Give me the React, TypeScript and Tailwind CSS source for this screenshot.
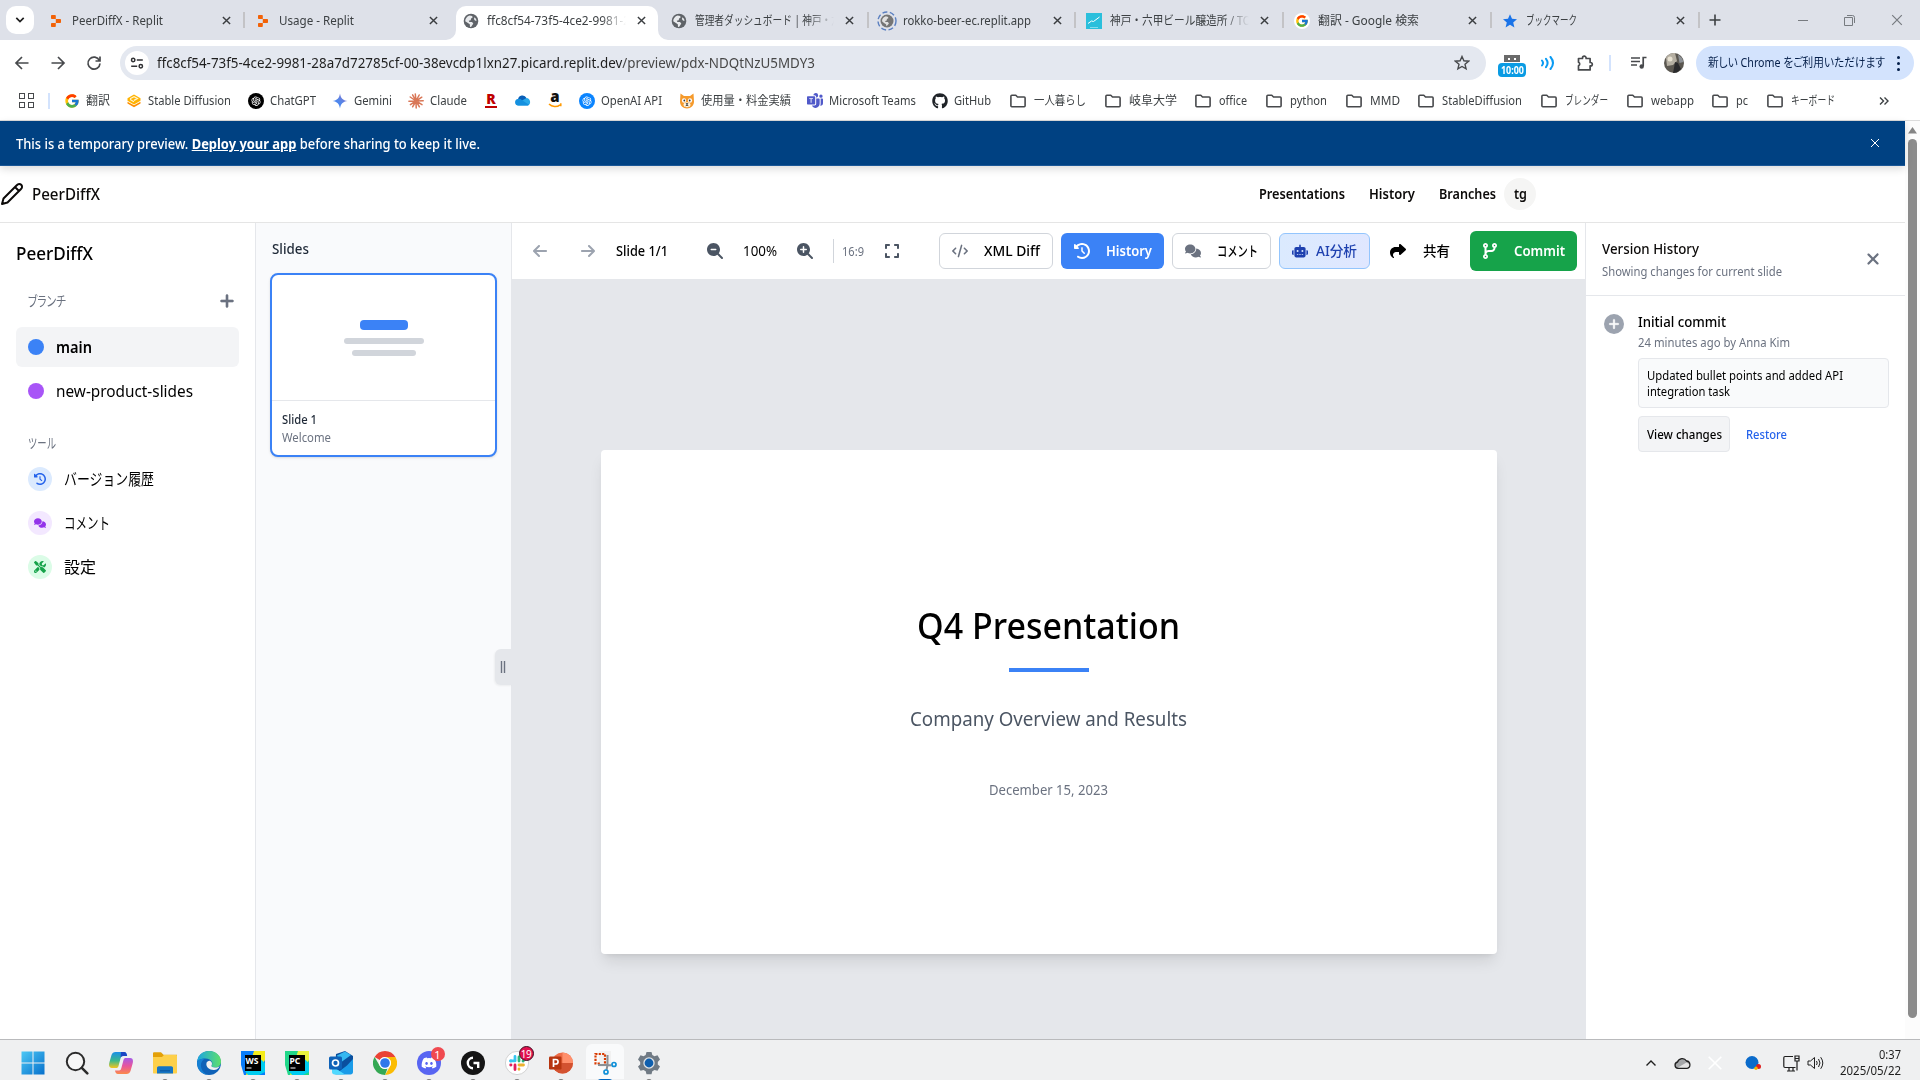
import { useLayoutEffect, useRef, useState } from "react";
import type { ReactNode } from "react";
import { FcGoogle } from "react-icons/fc";
import { AiOutlineOpenAI } from "react-icons/ai";
import { BsMicrosoftTeams } from "react-icons/bs";
import {
  FaArrowLeft,
  FaArrowRight,
  FaClockRotateLeft,
  FaCode,
  FaCodeBranch,
  FaComments,
  FaDiscord,
  FaExpand,
  FaGithub,
  FaMagnifyingGlassMinus,
  FaMagnifyingGlassPlus,
  FaPlus,
  FaRobot,
  FaScrewdriverWrench,
  FaShare,
  FaXmark,
} from "react-icons/fa6";

/** A single line of text condensed or widened to fill `w` pixels. */
function T({ w, className = "", children }: { w: number; className?: string; children: ReactNode }) {
  const ref = useRef<HTMLSpanElement>(null);
  const [k, setK] = useState(1);
  useLayoutEffect(() => {
    if (ref.current && ref.current.offsetWidth) {
      const r = document.createRange();
      r.selectNodeContents(ref.current);
      setK(w / (r.getBoundingClientRect().width || w));
    }
  }, [w]);
  return (
    <span className={`block shrink-0 ${className}`} style={{ width: w }}>
      <span ref={ref} className="inline-block origin-left whitespace-nowrap" style={{ transform: `scaleX(${k})` }}>
        {children}
      </span>
    </span>
  );
}

/* ---------- favicons ---------- */

const Replit = () => (
  <svg viewBox="0 0 16 16" className="size-4">
    <path fill="#f26207" d="M3 2.8C3 2.3 3.4 2 3.8 2H7c.5 0 .8.3.8.8V6H3.8A.8.8 0 0 1 3 5.2zM7.800 6H12.200c.5 0 .8.3.8.8v2.400c0 .5-.3.8-.8.8H7.800zM3 10.800c0-.5.4-.8.8-.8h4v3.200c0 .5-.3.8-.8.8H3.800a.8.8 0 0 1-.8-.8z" />
  </svg>
);

const Globe = ({ color = "#5f6368" }: { color?: string }) => (
  <svg viewBox="0 0 16 16" className="size-4">
    <circle cx="8" cy="8" r="7.300" fill={color} />
    <path fill="#e8eaed" d="M2.200 8.200c0-2.500 1.800-4.900 4.400-5.600L9.200 3l.4 1.600-1.500 1-.4 1.700-1.900.4.600 1.300 2.600.1 1.300 1.400-.9 1.500-1.200 1.700-1.200.2-.2-2.700-1.500-.9zM11.500 4.200l1.600 1.700.4 2-1.600-.3-1-1.500z" />
  </svg>
);

const GlobeLoading = () => (
  <svg viewBox="0 0 20 20" className="size-5">
    <circle cx="10" cy="10" r="9" fill="none" stroke="#5a7fc0" strokeWidth="1.400" strokeDasharray="5 2.500" />
    <circle cx="10" cy="10" r="6.500" fill="#757575" />
    <path fill="#e0e0e0" d="M5 10.200c0-2.300 1.500-4.200 3.900-4.900l2.200.6.200 1.300-1.300.8-.5 1.700-1.500.3.600 1 2.300.1 1 1.300-1 1.400-1.400 1.500-.5-2-2-1.200z" />
  </svg>
);

const Folder = () => (
  <svg viewBox="0 0 16 16" className="size-4">
    <path fill="none" stroke="#47494c" strokeWidth="1.600" strokeLinejoin="round" d="M.9 3.200c0-.5.4-.9.9-.9h4L7.500 4h6.700c.5 0 .9.4.9.9v7.900c0 .5-.4.9-.9.9H1.800a.9.9 0 0 1-.9-.9z" />
  </svg>
);

const StableDiffusionIcon = () => (
  <svg viewBox="0 0 16 16" className="size-4">
    <path fill="#ffb300" d="M8 1.500 14.500 5.200v2.600L8 11.500 1.500 7.800V5.200z" />
    <path fill="none" stroke="#fff3d0" strokeWidth="1.200" d="M4.500 6.800V5.500L8 3.600l3.500 1.900L8 7.400M4.500 6.800 8 8.800" />
    <path fill="#ff8f00" d="M1.500 8.700 8 12.300l6.500-3.600v1.800L8 14.300l-6.500-3.800z" />
  </svg>
);

const GeminiIcon = () => (
  <svg viewBox="0 0 16 16" className="size-4">
    <defs>
      <linearGradient id="gem" x1="0" x2="1" y1="1" y2="0">
        <stop offset="0" stopColor="#3186ff" />
        <stop offset="0.500" stopColor="#5686e8" />
        <stop offset="1" stopColor="#9168c0" />
      </linearGradient>
    </defs>
    <path fill="url(#gem)" d="M8 .5c.6 4.600 2.900 6.900 7.500 7.500-4.600.6-6.900 2.900-7.500 7.500-.6-4.600-2.900-6.900-7.500-7.500C5.100 7.400 7.400 5.100 8 .5z" />
  </svg>
);

const ClaudeIcon = () => (
  <svg viewBox="0 0 16 16" className="size-4">
    <g stroke="#d97757" strokeWidth="1.500" strokeLinecap="round">
      <path d="M8 8 7.300 1M8 8l3.200-6M8 8l5.800-3.800M8 8l7.200-.3M8 8l6 3.600M8 8l3.400 5.800M8 8l.2 7M8 8l-3.400 5.800M8 8l-5.600 3.700M8 8 .9 8.200M8 8 2.200 4M8 8 4.600 1.900" />
    </g>
  </svg>
);

const RakutenIcon = () => (
  <span className="flex w-4 flex-col items-center pb-px text-[#bf0000]">
    <span className="h-3 font-['Noto_Sans'] text-[14px] leading-3 font-black">R</span>
    <span className="mt-px h-0.5 w-3 bg-[#bf0000]" />
  </span>
);

const CloudIcon = () => (
  <svg viewBox="0 0 16 16" className="mb-0.5 size-4">
    <path fill="#0a5fb8" d="M3 7.500A4.500 4.500 0 0 1 11.500 6L9 10z" />
    <path fill="#28a8ea" d="M11.500 6a4 4 0 0 1 1.500 7.500H3.500A3.200 3.200 0 0 1 3 7.200c1.500-.3 2.700.3 4 1.200z" />
    <path fill="#1490df" d="M3.500 13.500A3.200 3.200 0 0 1 3.200 7.100c1.400-.2 2.800.4 4 1.200l6.800 4.500c-.4.5-1 .7-1.500.7z" />
  </svg>
);

const AmazonIcon = () => (
  <span className="flex w-4 flex-col items-center pb-0.5">
    <span className="h-[11px] font-['Noto_Sans'] text-[15px] leading-[9px] font-black text-[#111]">a</span>
    <svg viewBox="0 0 14 5" className="h-[5px] w-3.5">
      <path d="M1 1c3 3 8 3.300 11 .8M12.800.3v2.900" fill="none" stroke="#ff9900" strokeWidth="1.500" />
    </svg>
  </span>
);

const CatIcon = () => (
  <svg viewBox="0 0 16 16" className="size-4">
    <path fill="#f59a2c" d="M1.500.5 5 3h6l3.500-2.500.5 8c0 4-3 7-7 7s-7-3-7-7z" />
    <ellipse cx="5" cy="7.500" rx="2.100" ry="2.300" fill="#fff" />
    <ellipse cx="11" cy="7.500" rx="2.100" ry="2.300" fill="#fff" />
    <ellipse cx="8" cy="11.800" rx="3.500" ry="2.500" fill="#fff3dc" />
    <circle cx="5.300" cy="7.500" r=".9" fill="#333" />
    <circle cx="10.700" cy="7.500" r=".9" fill="#333" />
    <path d="M7 10.500h2l-1 1.300zM6.500 13 8 12l1.500 1" fill="#333" stroke="#333" strokeWidth=".5" />
  </svg>
);

const ChartTile = () => (
  <svg viewBox="0 0 16 16" className="size-4">
    <path fill="#2bbfdc" d="M0 0h16v16H0z" />
    <path d="M2 10.500 5.500 8l2 .5L13.500 4" stroke="#fff" fill="none" />
    <path d="M4 14.500h8" stroke="#9be5f2" strokeWidth=".8" />
  </svg>
);

const Close = ({ className }: { className: string }) => (
  <svg viewBox="0 0 10 10" className={className}>
    <path d="M1 1l8 8M9 1 1 9" stroke="currentColor" fill="none" />
  </svg>
);

/* ---------- browser chrome ---------- */

type Tab = { icon: ReactNode; label: string; w: number; active?: boolean; fade?: boolean; sep?: boolean };

const tabs: Tab[] = [
  { icon: <Replit />, label: "PeerDiffX - Replit", w: 91, sep: true },
  { icon: <Replit />, label: "Usage - Replit", w: 75 },
  { icon: <Globe />, label: "ffc8cf54-73f5-4ce2-9981-2", w: 143, active: true, fade: true },
  { icon: <Globe />, label: "管理者ダッシュボード | 神戸・六", w: 146, fade: true, sep: true },
  { icon: <GlobeLoading />, label: "rokko-beer-ec.replit.app", w: 128, sep: true },
  { icon: <ChartTile />, label: "神戸・六甲ビール醸造所 / TO", w: 141, fade: true, sep: true },
  {
    icon: (
      <span className="flex size-4 items-center justify-center rounded-full bg-white">
        <FcGoogle className="size-3.5" />
      </span>
    ),
    label: "翻訳 - Google 検索",
    w: 101,
    sep: true,
  },
  {
    icon: (
      <svg viewBox="0 0 16 16" className="size-4">
        <path fill="#1a73e8" d="m8 1.200 2 4.600 5 .4-3.800 3.300 1.200 4.900L8 11.800l-4.400 2.600 1.200-4.900L1 6.200l5-.4z" />
      </svg>
    ),
    label: "ブックマーク",
    w: 51,
    sep: true,
  },
];

function TabStrip() {
  return (
    <div className="flex h-10 items-start bg-[#dee1e9] pl-1.5">
      <div className="mt-1.5 flex h-7 w-7 items-center justify-center rounded-[10px] bg-white">
        <svg viewBox="0 0 10 6" className="h-1.5 w-2.5">
          <path d="M1.300.8 5 4.500 8.700.8" fill="none" stroke="#1f1f1f" strokeWidth="1.700" />
        </svg>
      </div>
      <div className="ml-[3.500px] flex">
        {tabs.map((t) => (
          <div
            key={t.label}
            className={
              t.active
                ? "relative mt-1.5 flex h-[34px] w-[207.750px] items-center before:absolute before:inset-y-0 before:right-[3px] before:left-[3px] before:rounded-t-[10px] before:bg-white"
                : "relative mt-1.5 flex h-[34px] w-[207.750px] items-center"
            }
          >
            {t.active && (
              <>
                <svg viewBox="0 0 10 10" className="absolute bottom-0 -left-[7px] size-2.5">
                  <path d="M10 0v10H0A10 10 0 0 0 10 0z" fill="#fff" />
                </svg>
                <svg viewBox="0 0 10 10" className="absolute -right-[7px] bottom-0 size-2.5">
                  <path d="M0 0v10h10A10 10 0 0 1 0 0z" fill="#fff" />
                </svg>
              </>
            )}
            <span className="relative ml-2.5 flex h-7 w-4 items-center justify-center pb-[5px]">
              <span className="shrink-0">{t.icon}</span>
            </span>
            <span
              className={
                t.fade
                  ? "relative ml-2 h-7 w-[139px] overflow-hidden [mask-image:linear-gradient(to_right,#000_82%,transparent)]"
                  : "relative ml-2 h-7 w-[139px] overflow-hidden"
              }
            >
              <T w={t.w} className="text-[12px] leading-6 text-[#3c4043]">
                {t.label}
              </T>
            </span>
            <span className="relative ml-[11px] flex h-7 items-center pb-[5px] text-[#3a3d40]">
              <svg viewBox="0 0 10 10" className="size-[9px]">
                <path d="M1 1l8 8M9 1 1 9" stroke="currentColor" strokeWidth="1.600" fill="none" />
              </svg>
            </span>
            {t.sep && <span className="ml-auto mb-1.5 h-4 w-0.5 bg-[#c3c3c6]" />}
          </div>
        ))}
      </div>
      <svg viewBox="0 0 12 12" className="mt-3.5 ml-[9px] size-3">
        <path d="M6 .5v11M.5 6h11" stroke="#3c4043" strokeWidth="1.600" />
      </svg>
      <div className="mt-3.5 mr-[17px] ml-auto flex h-3 items-center gap-9 text-[#777b80]">
        <span className="h-px w-2.5 bg-[#777b80]" />
        <svg viewBox="0 0 11 11" className="size-[11px]">
          <path d="M.5 2.500h8v8h-8zM3 .5h5.500a2 2 0 0 1 2 2V8" fill="none" stroke="currentColor" />
        </svg>
        <Close className="size-3" />
      </div>
    </div>
  );
}

function AddressBar() {
  return (
    <div className="flex h-[45px] items-center bg-white pt-px text-[#47494c]">
      <svg viewBox="0 0 16 16" className="ml-3.5 size-4">
        <path d="M14.500 8H2.500M8 2 2 8l6 6" fill="none" stroke="currentColor" strokeWidth="1.700" />
      </svg>
      <svg viewBox="0 0 16 16" className="ml-5 size-4">
        <path d="M1.500 8h12M8 2l6 6-6 6" fill="none" stroke="currentColor" strokeWidth="1.700" />
      </svg>
      <svg viewBox="0 0 16 16" className="ml-5 size-4">
        <path d="M13.400 5.500A6 6 0 1 0 14 8.500M14 1.500v4.500H9.500" fill="none" stroke="currentColor" strokeWidth="1.700" />
      </svg>
      <div className="ml-[18px] flex h-[34px] w-[1366px] items-center rounded-full bg-[#e4e8f0] pl-[5px]">
        <span className="flex size-6 items-center justify-center rounded-full bg-white">
          <svg viewBox="0 0 14 14" className="size-3.5">
            <g fill="none" stroke="#303134" strokeWidth="1.500">
              <circle cx="3.200" cy="4" r="1.700" />
              <circle cx="10.800" cy="10.300" r="1.700" />
              <path d="M6.800 4h6M1.200 10.300h6" />
            </g>
          </svg>
        </span>
        <T w={658} className="ml-2 text-[14px] leading-5 text-[#1f1f1f]">
          ffc8cf54-73f5-4ce2-9981-28a7d72785cf-00-38evcdp1lxn27.picard.replit.dev
          <span className="text-[#474747]">/preview/pdx-NDQtNzU5MDY3</span>
        </T>
        <svg viewBox="0 0 16 16" className="mr-4 ml-auto size-4">
          <path d="m8 1.500 1.900 4.300 4.700.4-3.600 3.100 1.100 4.600L8 11.500l-4.100 2.400L5 9.300 1.400 6.200l4.700-.4z" fill="none" stroke="currentColor" strokeWidth="1.400" />
        </svg>
      </div>
      <div className="ml-3 flex w-7 flex-col items-center pt-1.5">
        <span className="flex h-[7px] w-4 items-center justify-center gap-1 bg-[#6a6a6a]">
          <i className="h-0.5 w-0.5 bg-white" />
          <i className="h-0.5 w-0.5 bg-white" />
        </span>
        <span className="mt-px flex h-3.5 w-7 items-center justify-center rounded bg-[#0a9be3] text-white">
          <T w={23} className="text-[10px] leading-[14px] font-bold">
            10:00
          </T>
        </span>
      </div>
      <svg viewBox="0 0 15 14" className="ml-[15px] h-3.5 w-[15px]">
        <path d="M1 4.500q2 2.500 0 5M5 2.800q3.200 4.200 0 8.400M9.500 1q5 6 0 12" fill="none" stroke="#0a9bf3" strokeWidth="2" strokeLinecap="round" />
      </svg>
      <svg viewBox="0 0 18 18" className="ml-5 size-[18px]">
        <path d="M2.500 4.500h4V4a1.800 1.800 0 0 1 3.600 0v.5h4v4h.5a1.700 1.700 0 0 1 0 3.400h-.5v4H2.500v-4.200a1.800 1.800 0 0 0 0-3.400z" fill="none" stroke="currentColor" strokeWidth="1.700" strokeLinejoin="round" />
      </svg>
      <span className="ml-[15px] h-4 w-0.5 bg-[#d3e3fd]" />
      <svg viewBox="0 0 16 14" className="ml-5 h-3.5 w-4">
        <path d="M0 2h9M0 5.500h9M0 9h6" stroke="currentColor" strokeWidth="1.500" />
        <path d="M12.200 10V1.500H15.500" stroke="currentColor" strokeWidth="1.700" fill="none" />
        <circle cx="10.700" cy="10.500" r="2.200" fill="currentColor" />
      </svg>
      <svg viewBox="0 0 20 20" className="ml-[17px] size-5">
        <circle cx="10" cy="10" r="10" fill="#5b5750" />
        <path fill="#b5afa2" d="M2 4.500A10 10 0 0 1 11 0l2 8-4 4-6 1z" />
        <path fill="#2a2a2c" d="m11 9 3 1 3 6-4 3.500L9 20l1-5z" />
        <circle cx="6" cy="6" r="2.500" fill="#e8e2d2" />
        <path fill="#8d9196" d="M14 1.500 18 5l1.500 4-4 1z" />
      </svg>
      <div className="ml-3 flex h-[34px] w-[218px] items-center rounded-full bg-[#d3e3fd] pl-3 text-[#041e49]">
        <T w={177} className="text-[12px] leading-5 [font-feature-settings:'palt']">
          新しい Chrome をご利用いただけます
        </T>
        <span className="ml-3 flex flex-col gap-[3px]">
          <i className="size-[3px] rounded-full bg-[#041e49]" />
          <i className="size-[3px] rounded-full bg-[#041e49]" />
          <i className="size-[3px] rounded-full bg-[#041e49]" />
        </span>
      </div>
    </div>
  );
}

type Bookmark = { icon?: ReactNode; label?: string; w?: number; slot: number };

const bookmarks: Bookmark[] = [
  { icon: <FcGoogle className="size-4" />, label: "翻訳", w: 24, slot: 62 },
  { icon: <StableDiffusionIcon />, label: "Stable Diffusion", w: 83, slot: 122 },
  {
    icon: (
      <span className="flex size-4 items-center justify-center rounded-full bg-black text-white">
        <AiOutlineOpenAI className="size-3" />
      </span>
    ),
    label: "ChatGPT",
    w: 46,
    slot: 84,
  },
  { icon: <GeminiIcon />, label: "Gemini", w: 38, slot: 76 },
  { icon: <ClaudeIcon />, label: "Claude", w: 37, slot: 75 },
  { icon: <RakutenIcon />, slot: 32 },
  { icon: <CloudIcon />, slot: 32 },
  { icon: <AmazonIcon />, slot: 32 },
  {
    icon: (
      <span className="flex size-4 items-center justify-center rounded-full bg-[#0a84ff] text-white">
        <AiOutlineOpenAI className="size-3" />
      </span>
    ),
    label: "OpenAI API",
    w: 61,
    slot: 100,
  },
  { icon: <CatIcon />, label: "使用量・料金実績", w: 90, slot: 128 },
  { icon: <BsMicrosoftTeams className="size-4 text-[#5059c9]" />, label: "Microsoft Teams", w: 87, slot: 125 },
  { icon: <FaGithub className="size-4 text-[#1f2328]" />, label: "GitHub", w: 37, slot: 78 },
  { label: "一人暮らし", w: 52, slot: 95 },
  { label: "岐阜大学", w: 48, slot: 90 },
  { label: "office", w: 28, slot: 71 },
  { label: "python", w: 37, slot: 80 },
  { label: "MMD", w: 30, slot: 72 },
  { label: "StableDiffusion", w: 80, slot: 123 },
  { label: "ブレンダー", w: 43, slot: 86 },
  { label: "webapp", w: 43, slot: 85 },
  { label: "pc", w: 12, slot: 55 },
  { label: "キーボード", w: 44, slot: 117 },
];

function BookmarksBar() {
  return (
    <div className="flex h-9 items-center border-b border-[#dcdcdc] bg-white pb-1 pl-[19px]">
      <span className="grid grid-cols-2 gap-[3px]">
        <i className="size-1.5 border-[1.500px] border-[#47494c]" />
        <i className="size-1.5 border-[1.500px] border-[#47494c]" />
        <i className="size-1.5 border-[1.500px] border-[#47494c]" />
        <i className="size-1.5 border-[1.500px] border-[#47494c]" />
      </span>
      <span className="mr-3.5 ml-[14px] h-4 w-0.5 bg-[#d3e3fd]" />
      {bookmarks.map((b, i) => (
        <div key={i} className="flex shrink-0 items-center" style={{ width: b.slot }}>
          {b.icon ?? <Folder />}
          {b.label && (
            <T w={b.w ?? 0} className={b.icon ? "ml-1.5 text-[12px] leading-5 text-[#3c4043]" : "ml-2 text-[12px] leading-5 text-[#3c4043]"}>
              {b.label}
            </T>
          )}
        </div>
      ))}
      <svg viewBox="0 0 10 8" className="-ml-[5px] h-2 w-2.5">
        <path d="M1 .5 4.500 4 1 7.500M5.500.5 9 4 5.500 7.500" fill="none" stroke="#3c4043" strokeWidth="1.400" />
      </svg>
    </div>
  );
}

/* ---------- application ---------- */

function Banner() {
  return (
    <div className="relative z-10 flex h-[45px] items-center border-b border-[#1a5797] bg-[#004182] pl-4 text-white shadow-[0_3px_8px_rgba(0,0,0,0.14)]">
      <T w={464} className="pt-0.5 text-[14px] leading-5 font-medium">
        This is a temporary preview. <b className="font-bold underline">Deploy your app</b> before sharing to keep it live.
      </T>
      <Close className="mr-[25px] ml-auto size-2.5" />
    </div>
  );
}

function Header() {
  return (
    <div className="flex h-[57px] items-center border-b border-[#e5e5e5] bg-white text-[#0c0a09]">
      <svg viewBox="0 0 24 24" className="size-6 fill-none stroke-current stroke-2" strokeLinejoin="round">
        <path d="M17 3a2.850 2.830 0 1 1 4 4L7.500 20.500 2 22l1.500-5.500zM15 5l4 4" />
      </svg>
      <T w={68} className="ml-2 text-[16px] leading-6 font-medium">
        PeerDiffX
      </T>
      <nav className="ml-[1159px] flex items-center text-[14px] leading-5 font-semibold">
        <T w={86}>Presentations</T>
        <T w={46} className="ml-6">
          History
        </T>
        <T w={57} className="ml-6">
          Branches
        </T>
        <span className="ml-2 flex size-8 items-center justify-center rounded-full bg-[#f5f5f4]">
          <T w={13}>tg</T>
        </span>
      </nav>
    </div>
  );
}

const tools = [
  { label: "バージョン履歴", w: 90, icon: <FaClockRotateLeft className="size-3" />, tone: "bg-blue-100 text-[#2563eb]" },
  { label: "コメント", w: 46, icon: <FaComments className="size-3" />, tone: "bg-purple-100 text-[#9333ea]" },
  { label: "設定", w: 32, icon: <FaScrewdriverWrench className="size-3" />, tone: "bg-green-100 text-[#16a34a]" },
];

function Sidebar() {
  return (
    <aside className="w-64 shrink-0 border-r border-[#e5e7eb] bg-white px-4 pt-4 text-black">
      <T w={77} className="text-[18px] leading-7 font-medium">
        PeerDiffX
      </T>
      <div className="mt-6 flex h-5 items-center justify-between px-3 text-[#6b7280]">
        <T w={38} className="text-[14px] leading-5 [font-feature-settings:'palt']">
          ブランチ
        </T>
        <FaPlus className="mr-[-8px] size-4 stroke-current stroke-[20]" />
      </div>
      <div className="mt-4 flex h-10 w-[223px] items-center rounded-md bg-[#f3f4f6] pl-3">
        <span className="size-4 rounded-full bg-[#3b82f6]" />
        <T w={36} className="ml-3 text-[16px] leading-6 font-semibold">
          main
        </T>
      </div>
      <div className="mt-1 flex h-10 items-center pl-3">
        <span className="size-4 rounded-full bg-[#a855f7]" />
        <T w={137} className="ml-3 text-[16px] leading-6">
          new-product-slides
        </T>
      </div>
      <T w={28} className="mt-[22px] ml-3 text-[14px] leading-5 text-[#6b7280]">
        ツール
      </T>
      <div className="mt-1.5 flex flex-col gap-1">
        {tools.map((t) => (
          <div key={t.label} className="flex h-10 items-center pl-3">
            <span className={`flex size-6 items-center justify-center rounded-full ${t.tone}`}>{t.icon}</span>
            <T w={t.w} className="ml-3 text-[16px] leading-6">
              {t.label}
            </T>
          </div>
        ))}
      </div>
    </aside>
  );
}

function SlideList() {
  return (
    <section className="relative w-64 shrink-0 border-r border-[#e5e7eb] bg-[#f9fafc] px-3.5 pt-4">
      <T w={37} className="ml-0.5 text-[14px] leading-5 font-medium text-[#1f2937]">
        Slides
      </T>
      <div className="mt-3.5 h-[184px] w-[227px] overflow-hidden rounded-lg border-2 border-[#3b82f6] bg-white shadow-sm">
        <div className="flex h-[126px] flex-col items-center border-b border-[#e5e7eb] pt-[45px]">
          <span className="h-2.5 w-12 rounded bg-[#3b82f6]" />
          <span className="mt-2 h-1.5 w-20 rounded bg-[#d1d5db]" />
          <span className="mt-1.5 h-1.5 w-16 rounded bg-[#d1d5db]" />
        </div>
        <div className="px-2.5 pt-2.5 text-[12px] leading-[18px]">
          <T w={35} className="font-medium text-[#1f2937]">
            Slide 1
          </T>
          <T w={49} className="text-[#6b7280]">
            Welcome
          </T>
        </div>
      </div>
      <div className="absolute top-[426px] -right-px flex h-9 w-[17px] items-center rounded-l-md bg-[#e5e7eb] pl-[5px] shadow-[-1px_1px_2px_rgba(0,0,0,0.05)]">
        <span className="flex h-3 w-1.5 justify-between bg-[#cdd0d6] px-px">
          <i className="h-3 w-px bg-[#6b7280]" />
          <i className="h-3 w-px bg-[#6b7280]" />
        </span>
      </div>
    </section>
  );
}

function EditorToolbar() {
  return (
    <div className="flex h-14 items-center bg-white text-[14px] leading-5 text-black">
      <FaArrowLeft className="ml-5 size-4 text-[#9ca3af]" />
      <FaArrowRight className="ml-8 size-4 text-[#9ca3af]" />
      <T w={52} className="ml-5 font-medium">
        Slide 1/1
      </T>
      <FaMagnifyingGlassMinus className="ml-[39px] size-4 text-[#4b5563]" />
      <T w={34} className="ml-5">
        100%
      </T>
      <FaMagnifyingGlassPlus className="ml-5 size-4 text-[#4b5563]" />
      <span className="ml-5 h-6 w-px bg-[#d1d5db]" />
      <T w={22} className="ml-2 pt-0.5 text-[12px] text-[#6b7280]">
        16:9
      </T>
      <FaExpand className="ml-5 size-4 text-[#4b5563]" />
      <div className="ml-[39px] flex h-9 w-[114px] items-center rounded-md border border-[#d1d5db] pl-3">
        <FaCode className="size-4 text-[#6b7280]" />
        <T w={56} className="ml-4 font-medium">
          XML Diff
        </T>
      </div>
      <div className="ml-2 flex h-9 w-[103px] items-center rounded-md bg-[#3b82f6] pl-[13px] text-white">
        <FaClockRotateLeft className="size-4" />
        <T w={46} className="ml-4 font-semibold">
          History
        </T>
      </div>
      <div className="ml-2 flex h-9 w-[99px] items-center rounded-md border border-[#d1d5db] pl-3">
        <FaComments className="size-4 text-[#6b7280]" />
        <T w={41} className="ml-4 font-medium">
          コメント
        </T>
      </div>
      <div className="ml-2 flex h-9 w-[91px] items-center rounded-md border border-[#93c5fd] bg-linear-to-r from-[#dbeafe] to-[#e0e7ff] pl-3 text-[#1e40af]">
        <FaRobot className="size-4" />
        <T w={41} className="ml-2 font-medium">
          AI分析
        </T>
      </div>
      <FaShare className="ml-5 size-4" />
      <T w={27} className="ml-[17px] font-medium">
        共有
      </T>
      <div className="ml-5 flex h-10 w-[107px] items-center rounded-md bg-[#16a34a] pl-3 text-white">
        <FaCodeBranch className="size-4" />
        <T w={51} className="ml-4 font-semibold">
          Commit
        </T>
      </div>
    </div>
  );
}

function Canvas() {
  return (
    <div className="flex flex-1 flex-col items-center bg-[#e5e7eb] pt-[171px]">
      <div className="flex h-[504px] w-[896px] flex-col items-center rounded-sm bg-white pt-[156px] shadow-[0_10px_15px_-3px_rgba(0,0,0,0.1),0_4px_6px_-4px_rgba(0,0,0,0.1)]">
        <T w={263} className="text-[36px] leading-10 font-medium text-black">
          Q4 Presentation
        </T>
        <span className="mt-[22px] h-1 w-20 bg-[#3b82f6]" />
        <T w={277} className="mt-[33px] text-[20px] leading-7 text-[#4b5563]">
          Company Overview and Results
        </T>
        <T w={119} className="mt-[47px] text-[14px] leading-5 text-[#6b7280]">
          December 15, 2023
        </T>
      </div>
    </div>
  );
}

function VersionHistory() {
  return (
    <aside className="w-80 shrink-0 border-l border-[#e5e7eb] bg-white">
      <div className="flex h-[73px] items-center justify-between border-b border-[#e5e7eb] pr-[23px] pl-4">
        <div>
          <T w={97} className="text-[14px] leading-5 font-medium text-[#0c0a09]">
            Version History
          </T>
          <T w={180} className="mt-[5px] text-[12px] leading-4 text-[#6b7280]">
            Showing changes for current slide
          </T>
        </div>
        <FaXmark className="size-[18px] text-[#6b7280]" />
      </div>
      <div className="flex pt-4 pl-[18px] text-black">
        <span className="mt-0.5 flex size-5 items-center justify-center rounded-full bg-[#9ca3af] text-white">
          <FaPlus className="size-3 stroke-current stroke-[20]" />
        </span>
        <div className="ml-3.5">
          <T w={88} className="text-[14px] leading-5 font-medium">
            Initial commit
          </T>
          <T w={152} className="mt-[3px] text-[12px] leading-4 text-[#6b7280]">
            24 minutes ago by Anna Kim
          </T>
          <div className="mt-[7px] h-[50px] w-[251px] rounded border border-[#e5e7eb] bg-[#f9fafb] px-2 pt-[9px] text-[12px] leading-4">
            <T w={196}>Updated bullet points and added API</T>
            <T w={83}>integration task</T>
          </div>
          <div className="mt-2 flex items-center text-[12px] leading-4">
            <div className="flex h-9 w-[92px] items-center rounded border border-[#e5e7eb] bg-[#f3f4f6] pt-px pl-2">
              <T w={75} className="font-medium">
                View changes
              </T>
            </div>
            <T w={41} className="ml-4 pt-px font-medium text-[#2563eb]">
              Restore
            </T>
          </div>
        </div>
      </div>
    </aside>
  );
}

function Scrollbar() {
  return (
    <div className="flex w-[15px] shrink-0 flex-col items-center bg-[#fcfcfc] pt-1.5">
      <svg viewBox="0 0 9 7" className="h-[7px] w-[9px]">
        <path d="M4.500 0 9 6.500H0z" fill="#858585" />
      </svg>
      <span className="mt-[5px] h-[879px] w-[9px] rounded-full bg-[#8b8b8b]" />
    </div>
  );
}

/* ---------- taskbar ---------- */

const S = ({ children }: { children: ReactNode }) => (
  <svg viewBox="0 0 24 24" className="size-6">
    {children}
  </svg>
);

const JetBrains = ({ label, a, b }: { label: string; a: string; b: string }) => (
  <div className="relative size-6">
    <S>
      <path fill={a} d="M0 0h14l10 8v16H3L0 14z" />
      <path fill={b} d="M13 0h11v9l-8 15H5z" />
      <path fill="#00cdf0" d="M17 6l7 6v9l-6 3H7l-3-4z" />
      <path fill="#000" d="M4 4h16v16H4z" />
      <path fill="#fff" d="M5.500 16.500h5v1h-5z" />
    </S>
    <span className="absolute top-1 left-[5px] font-['Noto_Sans'] text-[8.500px] leading-[11px] font-bold text-white">{label}</span>
  </div>
);

const apps: { icon: ReactNode; running?: boolean; selected?: boolean }[] = [
  {
    icon: (
      <S>
        <defs>
          <linearGradient id="win" x2="1" y2="1">
            <stop stopColor="#4cc8f5" />
            <stop offset="1" stopColor="#0670cc" />
          </linearGradient>
        </defs>
        <path fill="url(#win)" d="M.5.500h11v11H.500zM12.500.500h11v11h-11zM.500 12.500h11v11H.500zM12.500 12.500h11v11h-11z" />
      </S>
    ),
  },
  {
    icon: (
      <S>
        <circle cx="10.500" cy="10.500" r="8.700" fill="#f6f6f6" stroke="#2b2b2b" strokeWidth="2" />
        <path d="m16.800 16.800 5.500 5.500" stroke="#2b2b2b" strokeWidth="2.600" strokeLinecap="round" />
      </S>
    ),
  },
  {
    icon: (
      <S>
        <defs>
          <linearGradient id="cp1" x2="0" y2="1">
            <stop stopColor="#1a8fe8" />
            <stop offset=".55" stopColor="#3cb98a" />
            <stop offset="1" stopColor="#f6c51c" />
          </linearGradient>
          <linearGradient id="cp2" x2="0" y2="1">
            <stop stopColor="#a45be8" />
            <stop offset=".5" stopColor="#e8559c" />
            <stop offset="1" stopColor="#fb8a4a" />
          </linearGradient>
        </defs>
        <path fill="url(#cp1)" d="M6.500 1H15c2 0 2.500 1.500 3 3.500l-4 0c-1.500 0-2 1-2.500 3L9.500 15c-.5 1.500-1 2-2.500 2H3c-3 0-3.500-2.500-2.500-6L2.500 4C3.200 2 4.500 1 6.500 1z" />
        <path fill="#1b46c4" d="M12 1h3c2 0 2.600 1.500 3.200 4h-3.700c-2 0-2.500 1-3 2z" />
        <path fill="url(#cp2)" d="M17.500 23H9c-2 0-2.500-1.500-3-3.500h4c1.500 0 2-1 2.500-3L14.500 9c.5-1.500 1-2 2.500-2h4c3 0 3.500 2.500 2.500 6l-2 7c-.7 2-2 3-4 3z" />
      </S>
    ),
  },
  {
    running: true,
    icon: (
      <S>
        <path fill="#e3a008" d="M0 2.500c0-.8.500-1.300 1.300-1.300H8l2.500 2.500H24V8H0z" />
        <path fill="#fdd04a" d="M0 6h9l2-2h12c.6 0 1 .4 1 1v16.500c0 .6-.4 1-1 1H1c-.6 0-1-.4-1-1z" />
        <path fill="#1575c5" d="M4 22.500V17c0-1 .7-1.800 1.800-1.800h12.400c1 0 1.800.8 1.800 1.800v5.500z" />
        <path fill="#0d5ea8" d="M7 19h10v1.500H7z" />
      </S>
    ),
  },
  {
    running: true,
    icon: (
      <S>
        <defs>
          <linearGradient id="ed1" x2="1">
            <stop stopColor="#1ba5e2" />
            <stop offset="1" stopColor="#5fe06a" />
          </linearGradient>
        </defs>
        <circle cx="12" cy="12" r="12" fill="#0f62b8" />
        <path fill="url(#ed1)" d="M.2 10.500C1 4 6 0 12 0c7 0 12 5 12 10.500 0 4-3 6-6 6-2.500 0-4-1-3.500-2 1-1.500 1-2.500.5-3.500C14 9 11.500 7.500 8.500 7.500 4.500 7.500 1 9 .2 10.500z" />
        <path fill="#1580d4" d="M.1 11C1 8.500 4.500 7.500 8 7.500c-3.500 2-5 6-3.500 10 1 3 3.500 5.500 6.500 6.400C4.500 23.500-.4 18 .1 11z" />
        <path fill="#f0f0f0" d="M9.500 12c.5-1.500 2-2.500 3.500-2.200 2 1 2.500 3 1.500 4.700-.5 1 1 2 3.500 2 2 0 3.500-.5 4.700-1.500-1.500 3.500-4 4-6.200 4-4 0-8-3-7-7z" />
      </S>
    ),
  },
  { running: true, icon: <JetBrains label="WS" a="#087cfa" b="#f5ec1c" /> },
  { running: true, icon: <JetBrains label="PC" a="#21d789" b="#e9f23c" /> },
  {
    running: true,
    icon: (
      <S>
        <path fill="#0a4f9e" d="M7 3 16 0l8 5v10l-4 8H6z" />
        <path fill="#35b8f1" d="M8 4.500 16 .5 22 4l-11 8z" />
        <path fill="#1a9be8" d="M24 8v13c0 1.500-1 2.500-2.500 2.500H6l12-9z" />
        <path fill="#50d9ff" d="M3 15l13 8.500H5.500C4 23.500 3 22.500 3 21z" />
        <rect y="5.500" width="13" height="13" rx="1.500" fill="#0f62b8" />
        <circle cx="6.500" cy="12" r="3" fill="none" stroke="#fff" strokeWidth="1.700" />
      </S>
    ),
  },
  {
    running: true,
    icon: (
      <S>
        <path fill="#ea4335" d="M12 0a12 12 0 0 1 10.400 6H12a6 6 0 0 0-5.200 3L1.600 6A12 12 0 0 1 12 0z" />
        <path fill="#fbbc04" d="M22.400 6A12 12 0 0 1 12 24l5.200-9a6 6 0 0 0 0-6H12V6z" />
        <path fill="#34a853" d="M12 24A12 12 0 0 1 1.600 6l5.200 9A6 6 0 0 0 12 18l2.500-.5z" />
        <circle cx="12" cy="12" r="6" fill="#fff" />
        <circle cx="12" cy="12" r="4.800" fill="#3078ea" />
      </S>
    ),
  },
  {
    running: true,
    icon: (
      <div className="relative flex size-6 items-center justify-center rounded-full bg-[#5865f2] text-white">
        <FaDiscord className="size-4" />
        <span className="absolute -top-1 -right-1 flex size-3.5 items-center justify-center rounded-full bg-[#f04a50] text-[11px] leading-none">1</span>
      </div>
    ),
  },
  {
    running: true,
    icon: (
      <S>
        <circle cx="12" cy="12" r="12" fill="#151515" />
        <path d="M12 6.800a5.200 5.200 0 0 0 0 10.400M12.500 12H17.200v5" fill="none" stroke="#fff" strokeWidth="2.400" />
      </S>
    ),
  },
  {
    running: true,
    icon: (
      <div className="relative size-6">
        <S>
          <circle cx="12" cy="12" r="11.600" fill="#fff" stroke="#c8c8c8" strokeWidth=".8" />
          <g strokeWidth="2.800" strokeLinecap="round">
            <path d="M10 5.500V9.500M5.500 10H6" stroke="#36c5f0" />
            <path d="M6 9.900h4" stroke="#36c5f0" />
            <path d="M14 6v4M18 10h.3" stroke="#2eb67d" />
            <path d="M14 14h4.500M14 18v.3" stroke="#ecb22e" />
            <path d="M10 14v4.500M5.700 14H6" stroke="#e01e5a" />
          </g>
        </S>
        <span className="absolute -top-[5px] -right-[5px] flex size-[15px] items-center justify-center rounded-full border border-[#3a1020] bg-[#e0104e] text-[10px] leading-none tracking-tighter text-white">
          19
        </span>
      </div>
    ),
  },
  {
    running: true,
    icon: (
      <S>
        <circle cx="13.500" cy="12" r="10.500" fill="#ed6c47" />
        <path fill="#ff8f6b" d="M13.500 1.500A10.500 10.500 0 0 1 24 12H13.500z" />
        <path fill="#d35230" d="M3 12h21a10.500 10.500 0 0 1-21 0z" />
        <rect y="5.500" width="12.500" height="13" rx="1.200" fill="#b7350f" />
        <path d="M4.500 16V8.500h2.300a2.200 2.200 0 0 1 0 4.500H4.500" fill="none" stroke="#fff" strokeWidth="1.700" />
      </S>
    ),
  },
  {
    selected: true,
    icon: (
      <S>
        <path fill="#f1f1f1" d="M6 0h12v16H6z" />
        <path d="M12 12.500V3H2.500v9.500h5" fill="none" stroke="#d83b01" strokeWidth="2.200" strokeDasharray="2.200 1.200" />
        <path d="M14.500 4v10H5M14.500 14l4 .2M14.500 14l-1 5" fill="none" stroke="#8a8f94" strokeWidth="2" />
        <circle cx="21" cy="13.500" r="2" fill="none" stroke="#1090d8" strokeWidth="1.700" />
        <circle cx="13" cy="21" r="2" fill="none" stroke="#1090d8" strokeWidth="1.700" />
      </S>
    ),
  },
  {
    running: true,
    icon: (
      <S>
        <path fill="#707a84" d="M9.500 1h5l.8 3 2.200 1.200 3-.9 2.500 4.300L20.800 11v2.400l2.200 2.100-2.500 4.300-3-.8-2.200 1.200-.8 3h-5l-.8-3L6.500 19l-3 .8L1 15.500l2.200-2.100V11L1 8.600l2.500-4.300 3 .9L8.700 4z" />
        <circle cx="12" cy="12" r="5.700" fill="#dfe3e6" />
        <circle cx="12" cy="12" r="4.400" fill="#0f5fae" />
      </S>
    ),
  },
];

function Taskbar() {
  return (
    <div className="flex h-[41px] shrink-0 overflow-hidden border-t border-[#b9babc] bg-[#eff0f1]">
      <div className="flex pl-[10.500px]">
        {apps.map((a, i) => (
          <div key={i} className="flex w-11 flex-col items-center">
            <div
              className={
                a.selected
                  ? "mt-1 flex h-[35px] w-[38px] shrink-0 justify-center rounded-t-md bg-[#f9fafb] pt-[7px]"
                  : "mt-1 flex h-[35px] w-[38px] shrink-0 justify-center pt-[7px]"
              }
            >
              {a.icon}
            </div>
            {a.selected && <span className="h-1 w-4 shrink-0 rounded-t-sm bg-[#0067c0]" />}
            {a.running && <span className="h-1 w-1.5 shrink-0 rounded-t-sm bg-[#7d7d7d]" />}
          </div>
        ))}
      </div>
      <div className="ml-auto flex h-[46px] items-center pr-[19px] text-[#1f1f1f]">
        <svg viewBox="0 0 10 6" className="h-1.5 w-2.5">
          <path d="M.5 5.500 5 1l4.500 4.500" fill="none" stroke="currentColor" strokeWidth="1.400" />
        </svg>
        <svg viewBox="0 0 17 12" className="ml-[18px] h-3 w-[17px]">
          <path d="M4 11.300a3.200 3.200 0 0 1-.5-6.300A5 5 0 0 1 12.500 4a3.700 3.700 0 0 1 .5 7.300z" fill="#a5a7a9" stroke="currentColor" strokeWidth="1.300" />
          <path d="M4 10.500h9c2-.5 2.500-2 2-3.500l-2.500-1.500z" fill="#e4e4e4" />
        </svg>
        <svg viewBox="0 0 14 14" className="ml-[17px] size-3.5">
          <path d="m.7.700 12.600 12.600M13.300.700.700 13.300" stroke="#fff" strokeWidth="1.600" />
        </svg>
        <svg viewBox="0 0 16 14" className="ml-[23px] h-3.5 w-4">
          <circle cx="7" cy="6.500" r="6.500" fill="#0b6bcb" />
          <circle cx="13.500" cy="10.500" r="2.500" fill="#e02020" />
          <circle cx="11" cy="12.300" r="1.700" fill="#f7b500" />
        </svg>
        <svg viewBox="0 0 17 17" className="ml-[22px] size-[17px]">
          <path d="M10 1.500H2A1.200 1.200 0 0 0 .8 2.700v8.600c0 .7.500 1.200 1.200 1.200h10.500M6 12.500V16M10 12.500V16M4 16h8" fill="none" stroke="currentColor" strokeWidth="1.200" />
          <path d="M12 1h4v5h-4zM12 3.500h4M14 6v9.500" fill="none" stroke="currentColor" strokeWidth="1.200" />
        </svg>
        <svg viewBox="0 0 17 14" className="ml-[7px] h-3.5 w-[17px]">
          <path d="M1 5v4h2.500L7.500 12.500v-11L3.500 5z" fill="none" stroke="currentColor" strokeLinejoin="round" />
          <path d="M9.500 5q1.400 2 0 4M11.500 3q3 4 0 8M13.700 1.200q4.200 5.800 0 11.600" fill="none" stroke="currentColor" />
        </svg>
        <div className="ml-4 flex w-[61px] flex-col items-end text-[12px] leading-4">
          <T w={22}>0:37</T>
          <T w={61}>2025/05/22</T>
        </div>
      </div>
    </div>
  );
}

export default function App() {
  return (
    <div className="flex h-[1080px] w-[1920px] flex-col overflow-hidden bg-white font-['Noto_Sans','Noto_Sans_CJK_JP',sans-serif]">
      <TabStrip />
      <AddressBar />
      <BookmarksBar />
      <div className="flex min-h-0 flex-1">
        <div className="flex flex-1 flex-col">
          <Banner />
          <Header />
          <div className="flex min-h-0 flex-1">
            <Sidebar />
            <SlideList />
            <main className="flex flex-1 flex-col">
              <EditorToolbar />
              <Canvas />
            </main>
            <VersionHistory />
          </div>
        </div>
        <Scrollbar />
      </div>
      <Taskbar />
    </div>
  );
}
